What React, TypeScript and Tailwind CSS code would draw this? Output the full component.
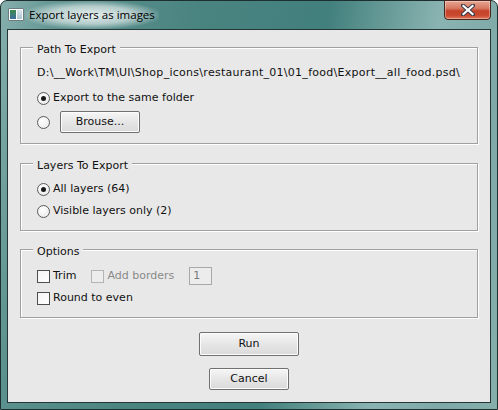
import React from "react";

const font = "font-['DejaVu_Sans',sans-serif] text-[11px] leading-[16px] text-[#111]";

function Radio({ checked }: { checked?: boolean }) {
  return (
    <span className="w-[13px] h-[13px] rounded-full border border-[#5b5b5b] bg-[radial-gradient(circle_at_40%_35%,#ffffff,#e6e6e6)] flex items-center justify-center shrink-0">
      {checked && <span className="w-[5px] h-[5px] rounded-full bg-[#1a1a1a]" />}
    </span>
  );
}

function Check({ disabled }: { disabled?: boolean }) {
  return (
    <span
      className={
        "block w-[13px] h-[13px] shrink-0 border " +
        (disabled
          ? "border-[#b4b4b4] bg-[#ececec]"
          : "border-[#4e4e4e] bg-[linear-gradient(135deg,#f4f4f4,#ffffff)]")
      }
    />
  );
}

function Btn({ label, w, h }: { label: string; w: string; h: string }) {
  return (
    <div
      className={
        w +
        " " +
        h +
        " border border-[#707070] rounded-[2px] bg-[linear-gradient(#f6f6f6,#e6e6e6_50%,#dadada)] shadow-[inset_0_0_0_1px_#fcfcfc] flex items-center justify-center"
      }
    >
      <span>{label}</span>
    </div>
  );
}

function Group({ title, className, children }: { title: string; className: string; children: React.ReactNode }) {
  return (
    <div className={"relative mx-[12px] border border-[#a0a0a0] shadow-[1px_1px_0_#ffffff,inset_1px_1px_0_#ffffff] " + className}>
      <span className="absolute left-[12px] -top-[6px] px-[4px] bg-[#e8e8e8] leading-[16px]">{title}</span>
      {children}
    </div>
  );
}

export default function App() {
  return (
    <div className="w-[498px] h-[410px] overflow-hidden bg-white">
      <div className="w-[498px] h-[410px] rounded-t-[7px] border border-[#1d2f2e] bg-[linear-gradient(100deg,#86afac_0%,#5b918e_12%,#4a8481_35%,#42807d_58%,#8ab4b1_78%,#7ea9a6_90%,#86afac_100%)] flex flex-col">
        {/* title bar */}
        <div className="h-[28px] relative flex items-start">
          <div className="ml-[7px] mt-[7px] w-[16px] h-[13px] border border-[#6d7c80] bg-white rounded-[1px] flex p-[1px] gap-[1px]">
            <div className="w-[6px] h-full bg-[linear-gradient(#3c8a4c,#3b6fa0)]" />
            <div className="flex-1 h-full bg-[linear-gradient(#d8e6ee,#aec4d2)]" />
          </div>
          <div className="ml-[1px] h-[28px] px-[4px] flex items-center bg-[radial-gradient(ellipse_at_center,rgba(255,255,255,0.85)_0%,rgba(255,255,255,0.55)_45%,rgba(255,255,255,0)_75%)]">
            <span className="font-['Open_Sans','Noto_Sans',sans-serif] text-[11.5px] leading-[16px] text-black -mt-[1px]">Export layers as images</span>
          </div>
          <div className="absolute right-[6px] top-[-1px] w-[47px] h-[20px] rounded-b-[4px] border border-[#4a2620] bg-[linear-gradient(#e7a593_0%,#d67a62_40%,#c4432a_55%,#c94a2f_80%,#e07a5a_100%)] shadow-[inset_0_0_0_1px_rgba(255,255,255,0.35)] flex items-center justify-center">
            <svg width="14" height="12" viewBox="0 0 14 12">
              <path d="M2 1.5 L12 10.5 M12 1.5 L2 10.5" stroke="#3b3b48" strokeWidth="4" strokeLinecap="square" />
              <path d="M2.5 2 L11.5 10 M11.5 2 L2.5 10" stroke="#ffffff" strokeWidth="2.2" strokeLinecap="square" />
            </svg>
          </div>
        </div>
        {/* client area */}
        <div className={"mx-[6px] h-[374px] border border-[#243636] bg-[#e8e8e8] flex flex-col " + font}>
          <Group title="Path To Export" className="mt-[17px] h-[97px] pl-[16px] pt-[17px] flex flex-col">
            <div className="h-[16px] whitespace-nowrap tracking-[0.28px]">D:\__Work\TM\UI\Shop_icons\restaurant_01\01_food\Export__all_food.psd\</div>
            <div className="mt-[9px] h-[16px] flex items-center gap-[3px]">
              <Radio checked />
              <span>Export to the same folder</span>
            </div>
            <div className="mt-[5px] flex items-center">
              <Radio />
              <div className="ml-[10px]">
                <Btn label="Brouse..." w="w-[80px]" h="h-[22px]" />
              </div>
            </div>
          </Group>
          <Group title="Layers To Export" className="mt-[19px] h-[68px] pl-[16px] pt-[17px] flex flex-col">
            <div className="h-[16px] flex items-center gap-[3px]">
              <Radio checked />
              <span>All layers (64)</span>
            </div>
            <div className="mt-[6px] h-[16px] flex items-center gap-[3px]">
              <Radio />
              <span>Visible layers only (2)</span>
            </div>
          </Group>
          <Group title="Options" className="mt-[18px] h-[69px] pl-[16px] pt-[17px] flex flex-col">
            <div className="h-[18px] flex items-center">
              <Check />
              <span className="ml-[3px]">Trim</span>
              <span className="ml-[15px]"><Check disabled /></span>
              <span className="ml-[3px] text-[#8a8a8a]">Add borders</span>
              <div className="ml-[15px] w-[23px] h-[18px] border border-[#a8a8a8] bg-[#ececec] text-[#7a7a7a] pl-[3px] flex items-center">1</div>
            </div>
            <div className="mt-[5px] h-[16px] flex items-center">
              <Check />
              <span className="ml-[3px]">Round to even</span>
            </div>
          </Group>
          <div className="mt-[14px] flex flex-col items-center">
            <Btn label="Run" w="w-[100px]" h="h-[24px]" />
            <div className="mt-[12px]">
              <Btn label="Cancel" w="w-[80px]" h="h-[22px]" />
            </div>
          </div>
        </div>
      </div>
    </div>
  );
}
